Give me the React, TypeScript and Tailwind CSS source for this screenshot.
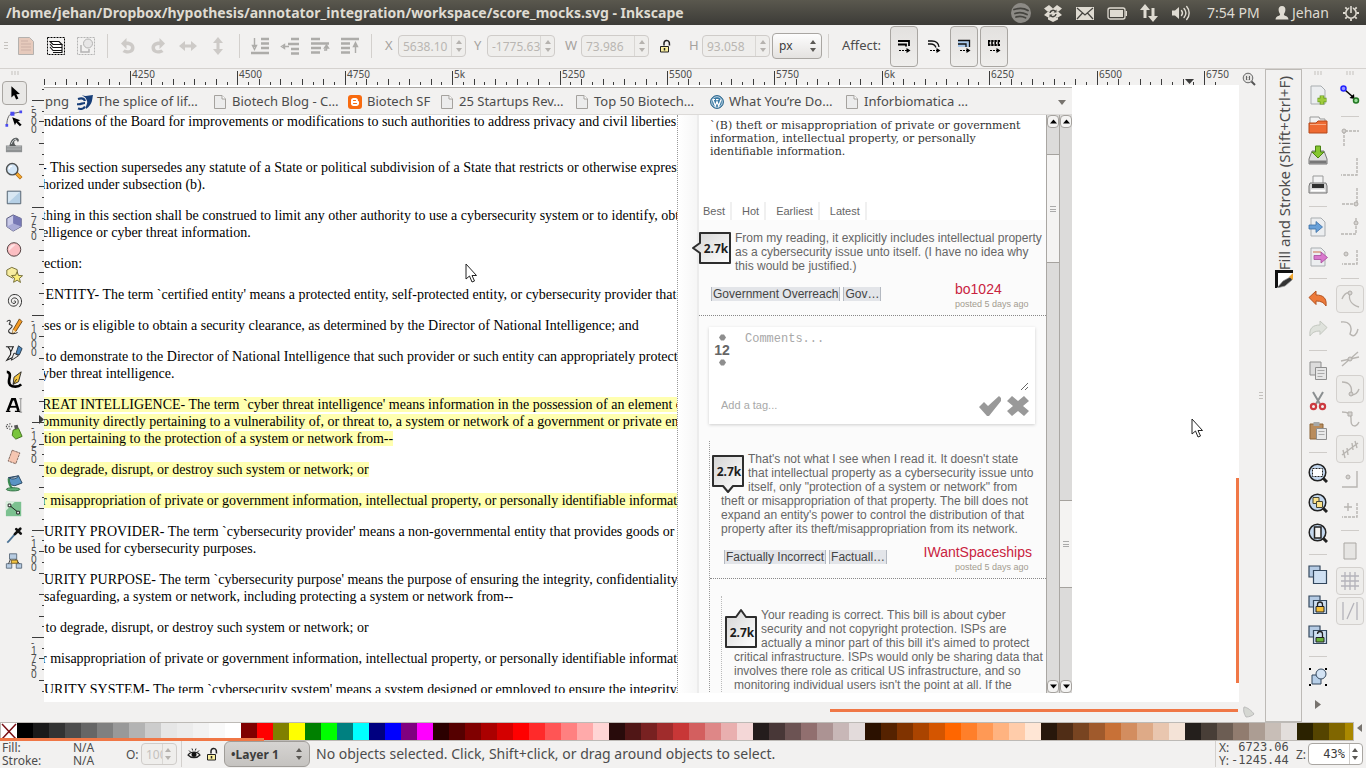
import React from "react";
import type { ReactNode } from "react";

/* ---------- shared helpers ---------- */

type IconProps = { children: ReactNode; size?: number; box?: number; faded?: boolean };

function Icon({ children, size = 20, box = 20, faded = false }: IconProps) {
  return (
    <svg
      aria-hidden="true"
      width={size}
      height={size}
      viewBox={`0 0 ${box} ${box}`}
      fill="none"
      className={faded ? "shrink-0 opacity-50" : "shrink-0"}
    >
      {children}
    </svg>
  );
}

function ToolButton({ label, children, pressed = false }: { label: string; children: ReactNode; pressed?: boolean }) {
  return (
    <button
      type="button"
      aria-label={label}
      className={
        pressed
          ? "flex h-7 w-7 items-center justify-center rounded border border-[#d3d0cd] bg-[#eeedeb]"
          : "flex h-7 w-7 items-center justify-center"
      }
    >
      {children}
    </button>
  );
}

function SpinArrows({ dim = true }: { dim?: boolean }) {
  return (
    <svg aria-hidden="true" width="10" height="16" viewBox="0 0 10 16" className="shrink-0">
      <path d="M2 6 5 2l3 4z" fill={dim ? "#b5b2ae" : "#5a5854"} />
      <path d="M2 10l3 4 3-4z" fill={dim ? "#b5b2ae" : "#5a5854"} />
    </svg>
  );
}

function Spin({ id, value }: { id: string; value: string }) {
  return (
    <div className="flex h-[22px] w-[68px] items-center rounded border border-[#cfccc9] bg-[#efeeec]">
      <input
        id={id}
        defaultValue={value}
        disabled
        className="h-full w-[53px] min-w-0 border-r border-[#d9d7d4] pl-1 text-[12px] text-[#b9b6b2]"
      />
      <span className="flex flex-1 justify-center">
        <SpinArrows />
      </span>
    </div>
  );
}

const VSep = () => <span className="flex w-3 justify-center"><span className="h-6 w-px bg-[#d3d0cd]" /></span>;
const HSep = () => <span className="flex h-3 items-center justify-center"><span className="h-px w-[18px] bg-[#cfccc9]" /></span>;

function GripH() {
  return (
    <Icon size={8} box={8}>
      <path d="M1 0v4M4 0v4M7 0v4" stroke="#c4c1bd" />
    </Icon>
  );
}

/* ---------- title bar ---------- */

function TitleBar() {
  return (
    <header className="flex h-[25px] shrink-0 items-center justify-between bg-linear-to-b from-[#5a584e] to-[#3c3b37] pl-1.5 pr-1.5 text-[#dfdbd2]">
      <h1 className="whitespace-nowrap text-[14px] font-bold leading-6">
        /home/jehan/Dropbox/hypothesis/annotator_integration/workspace/score_mocks.svg - Inkscape
      </h1>
      <div className="flex items-center text-[14px]">
        <span className="flex w-8 justify-center">
          <Icon>
            <circle cx="10" cy="10" r="10" fill="#8c8a85" />
            <path d="M3 6.500c4.500-1.500 10-1.500 14 1M4 10.500c4-1.300 8-1 12 1M5 14c3-1 6.500-.8 9.500.8" stroke="#45443f" strokeWidth="1.800" strokeLinecap="round" />
          </Icon>
        </span>
        <span className="flex w-8 justify-center">
          <Icon>
            <path d="M6 2 1 5.500 5 9 10 5.500zM14 2l5 3.500L15 9l-5-3.500zM1 12l4-3.500L10 12l-4 3zM19 12l-4-3.500L10 12l4 3zM5 15l5-2.500 5 2.500v1.500L10 19l-5-2.500z" fill="#dfdbd2" />
            <circle cx="10" cy="10.500" r="5" fill="#dfdbd2" />
            <path d="M7 10a3 3 0 0 1 5.500-1.300M13 11a3 3 0 0 1-5.500 1.300" stroke="#45443f" strokeWidth="1.500" />
            <path d="M13.500 6.500v3h-3zM6.500 14.500v-3h3z" fill="#45443f" />
          </Icon>
        </span>
        <span className="flex w-8 justify-center">
          <Icon>
            <path d="M1 4h18v13H1z" fill="#dfdbd2" />
            <path d="m2 5 8 7 8-7M2 16l5.500-6M18 16l-5.500-6" stroke="#45443f" strokeWidth="1.200" />
          </Icon>
        </span>
        <span className="flex w-8 justify-center">
          <Icon>
            <rect x="1" y="5" width="17" height="11" rx="2" stroke="#dfdbd2" strokeWidth="1.300" />
            <rect x="3" y="7" width="13" height="7" fill="#dfdbd2" />
            <path d="M19.300 8v5" stroke="#dfdbd2" strokeWidth="1.400" />
          </Icon>
        </span>
        <span className="flex w-8 justify-center">
          <Icon>
            <path d="M6 1 1 7h3.500v8h3V7H11zM14 19l-5-6h3.500V5h3v8H19z" fill="#dfdbd2" />
          </Icon>
        </span>
        <span className="flex w-8 justify-center">
          <Icon>
            <path d="M1 7.500h3L8 4v12l-4-3.500H1z" fill="#dfdbd2" />
            <path d="M10.500 7.500c1.200 1.500 1.200 3.500 0 5M13 5.500c2.300 2.700 2.300 6.300 0 9M15.700 3.500c3.300 3.800 3.300 9.200 0 13" stroke="#dfdbd2" strokeWidth="1.400" strokeLinecap="round" />
          </Icon>
        </span>
        <time className="ml-2.5 w-[67px] whitespace-nowrap">7:54 PM</time>
        <span className="flex w-4 justify-center">
          <Icon size={16} box={16}>
            <path d="M8 1c2.500 0 3.600 1.700 3.400 4-.2 2-1 3.400-1.500 4 0 1.200.5 1.500 2 2 1.500.6 2.400 1.400 2.600 3.500h-13c.2-2.100 1.100-2.900 2.600-3.500 1.500-.5 2-.8 2-2-.5-.6-1.300-2-1.500-4C4.400 2.700 5.500 1 8 1z" fill="#dfdbd2" />
          </Icon>
        </span>
        <span className="ml-0.5 w-[50px]">Jehan</span>
        <Icon size={18} box={18}>
          <circle cx="9" cy="9" r="5.200" stroke="#dfdbd2" strokeWidth="1.600" />
          <path d="M9 15v2M1 9h2M15 9h2M3.300 3.300l1.500 1.500M13.200 13.200l1.500 1.500M3.300 14.700l1.500-1.500M13.200 4.800l1.500-1.500" stroke="#dfdbd2" strokeWidth="1.800" />
          <path d="M7.300 2h3.400v7H7.300z" fill="#4a4943" />
          <path d="M9 2v7" stroke="#dfdbd2" strokeWidth="1.600" />
        </Icon>
      </div>
    </header>
  );
}

/* ---------- selector tool bar ---------- */

const rotateGlyph = "M3 7.500 8.500 2v3.500c5 0 8 2.500 8 6.300 0 3.700-3 5.700-6.500 5.700-2.500 0-4-.6-5.500-1.500l2-2.500c3 1.500 6.500 1 6.500-1.700 0-1.800-1.500-2.800-4.500-2.800V13z";

const stackArt = {
  bottom: { bars: "M11 3h8M11 7.500h8M11 12h8M1 17h18", arrow: "M4.500 2v9M2.500 9.500l2 4 2-4z" },
  down: { bars: "M11 3h8M8 8h11M11 13h8M11 17.500h8", arrow: "M3 10.500h6M4.500 8.500l-3 2 3 2z" },
  up: { bars: "M1 3h9M1 7.500h18M1 12h10M1 16.500h9", arrow: "M14 14h2.500v-3M14.500 12l2-3 2 3z" },
  top: { bars: "M1 3h18M1 7.500h9M1 12h9M1 16.500h9", arrow: "M15.500 17V8M13.500 10.500l2-4 2 4z" },
};

function Stack({ kind }: { kind: keyof typeof stackArt }) {
  return (
    <Icon faded>
      <path d={stackArt[kind].bars} stroke="#6b6965" strokeWidth="2.600" />
      <path d={stackArt[kind].arrow} stroke="#6b6965" strokeWidth="1.400" />
    </Icon>
  );
}

function AffectButton({ label, pressed, children }: { label: string; pressed: boolean; children: ReactNode }) {
  return (
    <button
      type="button"
      aria-label={label}
      aria-pressed={pressed}
      className={
        pressed
          ? "flex h-[41px] w-7 items-center justify-center rounded border border-[#a9a6a2] bg-linear-to-b from-[#e3e1df] to-[#efeeec]"
          : "flex h-[41px] w-7 items-center justify-center"
      }
    >
      {children}
    </button>
  );
}

function Padlock() {
  return (
    <Icon size={14} box={14}>
      <path d="M6 6.500V4a2.700 2.700 0 0 1 5.300-.5l.2 3" stroke="#222" strokeWidth="1.500" />
      <path d="M2.500 7.500h8v5.500h-8z" fill="#fbf0a0" stroke="#222" />
      <path d="M6.500 9v2.500" stroke="#222" strokeWidth="1.500" />
    </Icon>
  );
}

function SelectorBar() {
  const cell = "flex w-[30px] items-center justify-center";
  return (
    <div className="flex h-11 shrink-0 items-center border-b border-[#d5d2cf] pb-px text-[13px] text-[#4c4c4c]">
      <span className="flex w-[11px] justify-center">
        <Icon size={8} box={8}>
          <path d="M2 0.500h4M2 3.500h4M2 6.500h4" stroke="#c4c1bd" />
        </Icon>
      </span>
      <button type="button" aria-label="Select all" className={cell}>
        <Icon faded>
          <path d="M2.500 1.500h11l4 4v13h-15z" fill="#dba58a" stroke="#77736e" />
          <path d="M5 5h7M5 8h10M5 11h10M5 14h10" stroke="#a9705c" />
        </Icon>
      </button>
      <button type="button" aria-label="Select all in all layers" className={cell}>
        <Icon>
          <path d="M1.500 1.500h17v17h-17z" stroke="#000" strokeDasharray="2 1" />
          <path d="M4 5.500h9l3 3H7zM4 8l3 3.500h9v-3M4 11l3 3.500h9v-3M7 16.500h9v-2" fill="#fff" stroke="#111" strokeWidth="1.100" />
        </Icon>
      </button>
      <button type="button" aria-label="Deselect" className={cell}>
        <Icon faded>
          <path d="M1.500 1.500h17v17h-17z" stroke="#777" strokeDasharray="2 1" />
          <circle cx="12" cy="7.500" r="4.500" stroke="#777" fill="#ddd" />
          <path d="M5 9v7h8v-3" stroke="#777" strokeWidth="1.500" />
        </Icon>
      </button>
      <VSep />
      <button type="button" aria-label="Rotate counter-clockwise" className={cell}>
        <Icon faded><path d={rotateGlyph} fill="#a9a5a0" /></Icon>
      </button>
      <button type="button" aria-label="Rotate clockwise" className={cell}>
        <Icon faded><path d={rotateGlyph} fill="#a9a5a0" transform="translate(20 0) scale(-1 1)" /></Icon>
      </button>
      <button type="button" aria-label="Flip horizontally" className={cell}>
        <Icon faded><path d="M1 10l6-5v3.500h6V5l6 5-6 5v-3.500H7V15z" fill="#a9a5a0" /></Icon>
      </button>
      <button type="button" aria-label="Flip vertically" className={cell}>
        <Icon faded><path d="M10 1l5 6h-3.500v6H15l-5 6-5-6h3.500V7H5z" fill="#a9a5a0" /></Icon>
      </button>
      <VSep />
      <button type="button" aria-label="Lower to bottom" className={cell}><Stack kind="bottom" /></button>
      <button type="button" aria-label="Lower" className={cell}><Stack kind="down" /></button>
      <button type="button" aria-label="Raise" className={cell}><Stack kind="up" /></button>
      <button type="button" aria-label="Raise to top" className={cell}><Stack kind="top" /></button>
      <VSep />
      <label htmlFor="pos-x" className="w-[21px] pl-2 text-[#a5a29e]">X</label>
      <Spin id="pos-x" value="5638.10" />
      <label htmlFor="pos-y" className="w-[21px] pl-2 text-[#a5a29e]">Y</label>
      <Spin id="pos-y" value="-1775.63" />
      <label htmlFor="size-w" className="w-[26px] pl-2.5 text-[#a5a29e]">W</label>
      <Spin id="size-w" value="73.986" />
      <button type="button" aria-label="Lock width and height" className="flex w-8 justify-center"><Padlock /></button>
      <label htmlFor="size-h" className="w-[21px] pl-2 text-[#a5a29e]">H</label>
      <Spin id="size-h" value="93.058" />
      <div className="relative ml-0.5 flex items-center">
        <select aria-label="Unit" className="h-[26px] w-[50px] appearance-none rounded border border-[#a9a6a2] bg-linear-to-b from-[#fdfdfd] to-[#e4e2e0] pl-1.5 text-[12px] text-[#3c3c3c]">
          <option>px</option>
        </select>
        <span className="pointer-events-none absolute right-1"><SpinArrows dim={false} /></span>
      </div>
      <VSep />
      <span className="ml-2 w-12">Affect:</span>
      <div className="flex gap-0.5">
        <AffectButton label="Scale stroke width" pressed>
          <Icon size={14} box={14}>
            <path d="M1 2h11v5M1 5.500h8v2" stroke="#000" strokeWidth="1.800" />
            <path d="M2 11.500h8" stroke="#000" strokeDasharray="2 1" /><path d="M9.500 9v5l4-2.500z" fill="#000" />
          </Icon>
        </AffectButton>
        <AffectButton label="Scale rounded corners" pressed={false}>
          <Icon size={14} box={14}>
            <path d="M1 2h4c4 0 6.500 2.500 7 6M1 5h3c2.500 0 4 1 5 3.500" stroke="#111" strokeWidth="1.300" />
            <path d="M3 11.500h7" stroke="#000" strokeDasharray="2 1" /><path d="M9.500 9v5l4-2.500z" fill="#000" />
          </Icon>
        </AffectButton>
        <AffectButton label="Move gradients" pressed>
          <Icon size={14} box={14}>
            <path d="M1 2h11v6H1z" fill="#a9c8ea" />
            <path d="M1 1.500h11.500V8M1 5h8v3" stroke="#111" strokeWidth="1.300" />
            <path d="M3 11.500h7" stroke="#000" strokeDasharray="2 1" /><path d="M9.500 9v5l4-2.500z" fill="#000" />
          </Icon>
        </AffectButton>
        <AffectButton label="Move patterns" pressed>
          <Icon size={14} box={14}>
            <path d="M1 2h12M1 6h12" stroke="#000" strokeWidth="2" strokeDasharray="2.400 .8" /><path d="M1 4h12" stroke="#000" strokeDasharray="1.600 1.600" strokeWidth="2" />
            <path d="M3 11.500h7" stroke="#000" strokeDasharray="2 1" /><path d="M9.500 9v5l4-2.500z" fill="#000" />
          </Icon>
        </AffectButton>
      </div>
    </div>
  );
}

/* ---------- toolbox ---------- */

const tools: { label: string; art: ReactNode }[] = [
  { label: "Select", art: <path d="M6 2.500v12.500l3-2.700 2.300 5 2.500-1.200-2.300-4.800 4-.3z" fill="#000" /> },
  { label: "Edit nodes", art: <><path d="M2 17C2 9 5 4 8 4l10-2" stroke="#555" /><path d="M.500 15.500h3v3h-3zM6 2h4.500v4.500H6zM16 .5h3v3h-3z" fill="#4a4af0" /><path d="m8 8 3 9 1.500-3 4 4 2-1.500-4-4 2.500-1z" fill="#000" /></> },
  { label: "Tweak", art: <><path d="M1 10.500h18V18H1z" fill="#8e9192" /><path d="M2 12h16M2 14.500h16" stroke="#b9bcbc" /><path d="M5 11C6 4 10 1 13 2c3 1 3 4 1 5 0-2-1-2.500-2.500-2-2 .7-1.500 4 1 6z" fill="#565a5b" /><path d="M7 9c1-3 3-5.500 5.500-5.500" stroke="#dfe3e4" /></> },
  { label: "Zoom", art: <><path d="m12 12 6 6" stroke="#b06a10" strokeWidth="4" /><path d="m12.500 12.500 5 5" stroke="#f7ab30" strokeWidth="2.500" /><circle cx="8" cy="8" r="6.300" fill="#d3e6f7" stroke="#4f5253" strokeWidth="1.600" /><path d="M4.500 8a3.500 3.500 0 0 1 3.500-3.500" stroke="#fff" strokeWidth="1.500" /></> },
  { label: "Rectangle", art: <><path d="M2.500 3.500h15v14h-15z" fill="#b6d0e6" stroke="#4e5a66" /><path d="M3.500 16.500v-12h13z" fill="#d9e7f3" /></> },
  { label: "3D box", art: <><path d="m9 1 9 4v9l-9 5-7-5V5z" fill="#c9cae8" stroke="#4c4d75" /><path d="m9 10.500 9 3.500-9 5-7-5z" fill="#a9abd6" /><path d="M9 1v9.500l9 3.500V5z" fill="#7678b4" /></> },
  { label: "Ellipse", art: <><circle cx="10" cy="10.500" r="7.500" fill="#fbbec2" stroke="#433" /><path d="M4.500 12A6 6 0 0 1 12 5z" fill="#fde3e4" /></> },
  { label: "Star", art: <><path d="m7.500 1.500 6 2.500.5 6-5.500 3.500L2 10V4.500z" fill="#f7eda0" stroke="#6c6530" /><path d="m13.500 6.500 1.500 4 4.500.3-3.500 3 1.200 4.500-3.700-2.500-4 2.300 1.200-4.500-3.500-3 4.500-.3z" fill="#fbee7a" stroke="#6c6530" /></> },
  { label: "Spiral", art: <path d="M10.200 10.500c0-1.200 1.600-.8 1.600.6 0 2-3.200 2.400-4.300.3C6.200 8.700 8.300 6.300 11 6.600c3.700.5 4.700 4.700 2.600 7.300-2.600 3-7.600 2.200-9.200-1.300C2.400 8 5.300 3.200 10 2.800c5.500-.4 9 4 8.300 9-.3 2-1.100 3.700-2.400 5" stroke="#333" strokeWidth="1.100" /> },
  { label: "Pencil", art: <><path d="M2 4c3-3 5-1 3 2-1.500 2 3 1 3 3 0 3-5 3-4 6s7 3 10 1" stroke="#333" strokeWidth="1.200" /><path d="m16 1 3 3-7 11-3.500 2 .5-4z" fill="#f59a23" stroke="#6c4410" /><path d="m9 13 3 2-3.500 2z" fill="#f6e4b8" /></> },
  { label: "Bezier", art: <><path d="M1 3h9M9 3 7 8M3 3c3 3 4 6 3 9l-4 6 9-4" stroke="#222" strokeWidth="1.200" /><path d="m15 2 4 3-3 7-4-1z" fill="#4d88bd" stroke="#234" /><path d="m10 10 5 3-6 4-2 1z" fill="#ececec" stroke="#222" /></> },
  { label: "Calligraphy", art: <><path d="M2 2c3 0 4 3 3 7s-1 8 3 9 8 0 10-2" stroke="#000" strokeWidth="3" /><path d="m18 2-8 6-1 8 6-3z" fill="#f5c640" stroke="#222" /><path d="m9 16 4-6" stroke="#222" /></> },
  { label: "Text", art: <><path d="m3 16.500 5-13h3l4 13" stroke="#000" strokeWidth="2.800" /><path d="M5 12h8" stroke="#000" strokeWidth="2" /><path d="M1 17h5M11 17h6" stroke="#000" strokeWidth="1.500" /><path d="M17.500 3v15M16 3h3M16 18h3" stroke="#888" /></> },
  { label: "Spray", art: <><path d="m9 9 6-2 4 9-7 3-4-4z" fill="#79c53c" stroke="#3c6c18" /><path d="m10 4 4-1 1 4-4 1z" fill="#555" /><path d="M2 3h1M5 2h1M4 5h1M7 5h1M2 7h1M5 8h1M1 5h1" stroke="#222" strokeWidth="1.400" /></> },
  { label: "Eraser", art: <path d="m8 2.500 8.500 3L12 17.500l-8.500-3z" fill="#f6c6b1" stroke="#7c6258" strokeDasharray="3 .7" /> },
  { label: "Paint bucket", art: <><path d="m4 4 11-2 4 8-8 3-5-1z" fill="#5a94c4" stroke="#24415c" /><path d="M4 4c5 0 8-1 11-2-1 3-7 5-11 2z" fill="#cfdde8" stroke="#24415c" /><path d="M4 5c0 5 1 8 4 11" stroke="#3a8a50" strokeWidth="2.200" /><ellipse cx="9" cy="17" rx="7.500" ry="1.800" fill="#62b377" stroke="#2c6b3d" /></> },
  { label: "Gradient", art: <><path d="M1 2h17v16H1z" fill="#7cc190" /><path d="M1 2h10L1 12z" fill="#d8efdd" /><path d="m5 6 10 8" stroke="#111" /><path d="M3.500 4.500h3v3h-3zM13 12.500h3v3h-3z" fill="#fff" stroke="#111" /></> },
  { label: "Dropper", art: <><path d="m12 8-7 8-2.500 2.500" stroke="#4c7396" strokeWidth="2" /><path d="m12.500 3.500 5 5M11 9l6-6" stroke="#111" strokeWidth="3" strokeLinecap="round" /></> },
  { label: "Connector", art: <><path d="M5 2h8v6H5zM1.500 13h6v5h-6zM12.500 13h6v5h-6z" fill="#b7cce2" stroke="#5b6b7c" /><path d="M6 8 4 13M12 8l4 5" stroke="#333" /><path d="M7 9h7v3.500H7z" fill="#f5c640" stroke="#6c5520" /></> },
];

function Toolbox() {
  return (
    <nav aria-label="Tools" className="flex w-[27px] shrink-0 flex-col items-end">
      <span className="flex h-[11px] w-6 items-center justify-center"><GripH /></span>
      {tools.map((t, i) => (
        <button
          key={t.label}
          type="button"
          aria-label={t.label}
          className={
            i === 0
              ? "my-px flex h-6 w-[25px] items-center justify-center rounded border border-[#a9a6a2] bg-[#e9e8e6]"
              : "flex h-[26px] w-[25px] items-center justify-center pr-0.5"
          }
        >
          <Icon size={18}>{t.art}</Icon>
        </button>
      ))}
    </nav>
  );
}

/* ---------- rulers ---------- */

const STEP = 107.4;
const hLabels = ["4250", "4500", "4750", "5k", "5250", "5500", "5750", "6k", "6250", "6500", "6750"];
const vLabels = ["-500", "-750", "-1000", "-1250", "-1500", "-1750"];

function HRuler() {
  const ticks = Array.from({ length: 112 }, (_, i) => ({ x: Math.round(86 - STEP + (i * STEP) / 10), k: i % 10 }));
  return (
    <svg aria-hidden="true" width="100%" height="20" className="-mt-1 block shrink-0 overflow-hidden">
      {ticks.map((t, i) => (
        <path key={i} d={`M${t.x + 0.5} ${t.k === 0 ? 6 : t.k % 2 ? 17 : 14}V20`} stroke="#3c3c3c" />
      ))}
      {hLabels.map((l, i) => (
        <text key={l} x={Math.round(88 + i * STEP)} y="13" fontSize="10" fill="#4c4c4c">{l}</text>
      ))}
      <path d="M1141 14h9l-4.500 5z" fill="#3c3c3c" />
    </svg>
  );
}

function VRuler() {
  const ticks = Array.from({ length: 66 }, (_, i) => ({ y: Math.round(15 - STEP + (i * STEP) / 10), k: i % 10 }));
  return (
    <div className="flex w-[17px] shrink-0 pt-4">
      <svg aria-hidden="true" width="17" height="100%" className="block shrink-0 overflow-hidden">
        {ticks.map((t, i) => (
          <path key={i} d={`M${t.k === 0 ? 5 : t.k % 2 ? 15 : 12} ${t.y + 0.5}H17`} stroke="#3c3c3c" />
        ))}
        {vLabels.map((l, i) => (
          <text key={l} y={Math.round(15 + i * STEP) + 1} fontSize="10" fill="#4c4c4c">
            {l.split("").map((c, j) => (
              <tspan key={j} x="4" dy="8">{c}</tspan>
            ))}
          </text>
        ))}
        <path d="M12 330v9l5-4.500z" fill="#3c3c3c" />
      </svg>
    </div>
  );
}

/* ---------- browser page on the canvas ---------- */

function PageGlyph() {
  return (
    <Icon size={14} box={14}>
      <path d="M1.500.5h7.500l3.500 3.500v9.500h-11z" fill="#ececec" stroke="#a5a29e" />
      <path d="M9 .5V4h3.500" fill="#fff" stroke="#a5a29e" />
    </Icon>
  );
}

const bookmarks: { title: string; art: ReactNode }[] = [
  {
    title: "The splice of lif…",
    art: (
      <Icon size={16} box={16}>
        <path d="M5 1c4 2 7 0 11 0-1 4 0 9-7 14-1-3 2-5 1-8C9 3 7 3 5 1z" fill="#173e78" />
        <path d="M1 5c3-1 6-1 7 2M0 10c3 1 5-1 8-1M1 14.500c3 1 6 0 7-2" stroke="#173e78" strokeWidth="2.200" />
      </Icon>
    ),
  },
  { title: "Biotech Blog - C…", art: <PageGlyph /> },
  {
    title: "Biotech SF",
    art: (
      <Icon size={14} box={14}>
        <rect width="14" height="14" rx="3" fill="#f86b10" />
        <path d="M5.500 3h2.200c1.300 0 2.200 1 2.200 2.200 0 .8.300 1 1.100 1.200v2.100c0 1.500-1.100 2.500-2.500 2.500h-3C4 11 3 10 3 8.500v-3C3 4 4 3 5.500 3z" fill="#fff" />
        <path d="M5.500 5.500h2M5.500 8.500h3" stroke="#f86b10" strokeWidth="1.200" strokeLinecap="round" />
      </Icon>
    ),
  },
  { title: "25 Startups Rev…", art: <PageGlyph /> },
  { title: "Top 50 Biotech…", art: <PageGlyph /> },
  {
    title: "What You’re Do…",
    art: (
      <Icon size={14} box={14}>
        <circle cx="7" cy="7" r="6.400" fill="#3c7ba5" stroke="#2b658b" />
        <circle cx="7" cy="7" r="5.300" stroke="#dce9f1" strokeWidth=".8" />
        <path d="M3 4.500 5.300 11 7 6.500 8.700 11 11 4.500M2.500 4.500h2.500M6 4.500h2.500" stroke="#fff" strokeWidth="1.200" />
      </Icon>
    ),
  },
  { title: "Inforbiomatica …", art: <PageGlyph /> },
];

function BookmarkBar() {
  return (
    <div className="flex h-7 items-center border-y border-t-[#a9a6a2] border-b-[#dcdad8] bg-[#f2f1f0] pt-0.5 text-[13px] text-[#4c4c4c]">
      <a href="#png" className="w-[33px] pl-px">png</a>
      {bookmarks.map((b) => (
        <a
          key={b.title}
          href="#bookmark"
          className={b.title === "Biotech SF" ? "flex w-[92px] items-center gap-1 whitespace-nowrap" : "flex w-[135px] items-center gap-1 whitespace-nowrap"}
        >
          <span className="flex w-4 justify-center">{b.art}</span>
          {b.title}
        </a>
      ))}
      <span className="ml-auto mr-1.5">
        <Icon size={8} box={8}><path d="M0 2h8L4 7z" fill="#77736e" /></Icon>
      </span>
    </div>
  );
}

type Line = { text: string; cut?: boolean };
type Para = { mark?: boolean; lines: Line[] };

const bill: Para[] = [
  { lines: [{ text: "- This section supersedes any statute of a State or political subdivision of a State that restricts or otherwise expressly", cut: true }, { text: "horized under subsection (b).", cut: true }] },
  { lines: [{ text: "thing in this section shall be construed to limit any other authority to use a cybersecurity system or to identify, obtain", cut: true }, { text: "elligence or cyber threat information.", cut: true }] },
  { lines: [{ text: "ection:" }] },
  { lines: [{ text: " ENTITY- The term `certified entity' means a protected entity, self-protected entity, or cybersecurity provider that--", cut: true }] },
  { lines: [{ text: "ses or is eligible to obtain a security clearance, as determined by the Director of National Intelligence; and" }] },
  { lines: [{ text: " to demonstrate to the Director of National Intelligence that such provider or such entity can appropriately protect", cut: true }, { text: "yber threat intelligence.", cut: true }] },
  { mark: true, lines: [{ text: "REAT INTELLIGENCE- The term `cyber threat intelligence' means information in the possession of an element of", cut: true }, { text: "ommunity directly pertaining to a vulnerability of, or threat to, a system or network of a government or private entity", cut: true }, { text: "tion pertaining to the protection of a system or network from--" }] },
  { mark: true, lines: [{ text: " to degrade, disrupt, or destroy such system or network; or", cut: true }] },
  { mark: true, lines: [{ text: "r misappropriation of private or government information, intellectual property, or personally identifiable information", cut: true }] },
  { lines: [{ text: "URITY PROVIDER- The term `cybersecurity provider' means a non-governmental entity that provides goods or" }, { text: "to be used for cybersecurity purposes." }] },
  { lines: [{ text: "URITY PURPOSE- The term `cybersecurity purpose' means the purpose of ensuring the integrity, confidentiality," }, { text: "safeguarding, a system or network, including protecting a system or network from--" }] },
  { lines: [{ text: " to degrade, disrupt, or destroy such system or network; or", cut: true }] },
  { lines: [{ text: "r misappropriation of private or government information, intellectual property, or personally identifiable information", cut: true }] },
  { lines: [{ text: "URITY SYSTEM- The term `cybersecurity system' means a system designed or employed to ensure the integrity," }] },
];

function BillText() {
  return (
    <article className="w-[634px] shrink-0 overflow-hidden border-r border-dotted border-[#999] bg-white font-['Liberation_Serif',serif] text-[14px] leading-[17px] text-black">
      <p className="mb-[29px] -mt-0.5 whitespace-pre">ndations of the Board for improvements or modifications to such authorities to address privacy and civil liberties</p>
      {bill.map((p, i) => (
        <p key={i} className="mb-3.5 whitespace-pre">
          {p.lines.map((l) => (
            <span key={l.text} className={l.cut ? "-ml-0.5 block" : "block"}>
              {p.mark ? <mark className="bg-[#ffffb0] text-black">{l.text}</mark> : l.text}
            </span>
          ))}
        </p>
      ))}
    </article>
  );
}

const badgeShapes = {
  left: "M8 2h30v30H8V22l-7-5 7-5z",
  down: "M2 2h30v30H22l-5 6-5-6H2z",
  up: "M2 9h10l5-7 5 7h10v30H2z",
};

function Badge({ tail }: { tail: "left" | "down" | "up" }) {
  const left = tail === "left";
  return (
    <svg role="img" aria-label="Score 2.7k" width={left ? 40 : 34} height={left ? 34 : 41} className="shrink-0">
      <defs>
        <linearGradient id={`g-${tail}`} x1="0" y1="0" x2="1" y2="1">
          <stop offset="0" stopColor="#d4d4d4" />
          <stop offset="1" stopColor="#fff" />
        </linearGradient>
      </defs>
      <path d={badgeShapes[tail]} fill={`url(#g-${tail})`} stroke="#2e2e2e" strokeWidth="2" strokeLinejoin="round" />
      <text x={left ? 24 : 18} y={tail === "up" ? 29 : 22} fontSize="12" fontWeight="700" textAnchor="middle" fill="#1c1c1c" className="font-['Noto_Sans',sans-serif]">2.7k</text>
    </svg>
  );
}

function Meta({ tags, user, indent }: { tags: string[]; user: string; indent: string }) {
  return (
    <div className={`flex items-start justify-between pr-3.5 pt-2 ${indent}`}>
      <ul className="flex gap-[3px] pt-1.5">
        {tags.map((t) => (
          <li key={t}>
            <a href="#tag" className="block border-x border-[#b4b9c1] bg-[#e3e5e9] px-px text-[12px] leading-[14px] text-[#444]">{t}</a>
          </li>
        ))}
      </ul>
      <div>
        <a href="#user" className="block text-[14px] leading-4 text-[#c9233f]">{user}</a>
        <span className="ml-auto block w-[77px] whitespace-nowrap text-[9px] leading-[15px] text-[#a39b90]">posted 5 days ago</span>
      </div>
    </div>
  );
}

function Scroller({ thumb }: { thumb: string }) {
  const cap = "flex h-[13px] w-full items-center justify-center rounded-sm border border-[#a5a29e] bg-[#f4f3f2]";
  return (
    <div className="flex w-[13px] shrink-0 flex-col border-l border-[#aaa7a3] bg-[#dcdbda]">
      <button type="button" aria-label="Scroll up" className={cap}>
        <Icon size={7} box={7}><path d="M0 5.500h7L3.500 1.500z" fill="#000" /></Icon>
      </button>
      <div className="relative flex-1">
        <div className={`absolute inset-x-0 flex items-center justify-center border-y border-[#a5a29e] bg-[#f4f3f2] ${thumb}`}>
          <Icon size={6} box={6}><path d="M0 .5h6M0 3.500h6M0 5.500h6" stroke="#aaa" /></Icon>
        </div>
      </div>
      <button type="button" aria-label="Scroll down" className={cap}>
        <Icon size={7} box={7}><path d="M0 1.500h7L3.500 5.500z" fill="#000" /></Icon>
      </button>
    </div>
  );
}

function VoteDot() {
  return <Icon size={7} box={7}><path d="M2 .5h3l2 3-2 3H2l-2-3z" fill="#8e8e8e" /></Icon>;
}

function CommentForm() {
  return (
    <form className="ml-2.5 mr-[11px] mt-[11px] bg-white pb-1.5 pr-1.5 pt-1 shadow-[0_1px_3px_rgba(0,0,0,0.18)]">
      <div className="flex">
        <div className="flex w-[26px] flex-col items-center pt-[3px] text-[14px] font-bold leading-[18px] text-[#666]">
          <VoteDot />
          12
          <VoteDot />
        </div>
        <textarea
          aria-label="Comment"
          placeholder="Comments..."
          className="ml-1.5 h-[60px] flex-1 bg-transparent px-1 font-['Liberation_Mono',monospace] text-[12px] leading-4 placeholder:text-[#a8a8a8]"
        />
      </div>
      <div className="flex h-[27px] items-center pl-3">
        <input aria-label="Add a tag" placeholder="Add a tag..." className="min-w-0 flex-1 bg-transparent text-[11px] placeholder:text-[#a8a8a8]" />
        <button type="button" aria-label="Save" className="mr-1.5">
          <Icon size={22} box={22}><path d="m0 13 5-5 4 4L20 2l2 2v3L10 22H8z" fill="#999" /></Icon>
        </button>
        <button type="button" aria-label="Cancel">
          <Icon size={22} box={22}><path d="M5 2 11 7l6-5 5 5-6 5 6 5-5 5-6-5-6 5-5-5 6-5-6-5z" fill="#999" /></Icon>
        </button>
      </div>
    </form>
  );
}

function Discussion() {
  const tab = "h-[18px] border-r-2 border-[#f0f0f0] px-[5px]";
  return (
    <aside className="w-[349px] shrink-0 border-l-2 border-[#ececec] bg-[#fbfbfb] font-['Liberation_Sans',sans-serif] text-[12px] leading-[14px] text-[#666]">
      <div className="bg-white">
        <blockquote className="h-[87px] whitespace-nowrap pl-[11px] pt-1 font-['DejaVu_Serif',serif] text-[11px] leading-[13px] text-[#333]">
          `(B) theft or misappropriation of private or government
          <br />
          information, intellectual property, or personally
          <br />
          identifiable information.
        </blockquote>
        <div className="-ml-px flex gap-[5px] text-[11px] leading-[18px]">
          <button type="button" className={tab}>Best</button>
          <button type="button" className={tab}>Hot</button>
          <button type="button" className={tab}>Earliest</button>
          <button type="button" className={tab}>Latest</button>
        </div>
      </div>

      <section className="border-b border-dotted border-[#888] pb-[3px] pt-[11px]">
        <div className="-ml-[7px] flex gap-[3px] whitespace-nowrap">
          <Badge tail="left" />
          <p>
            From my reading, it explicitly includes intellectual property
            <br />
            as a cybersecurity issue unto itself. (I have no idea why
            <br />
            this would be justified.)
          </p>
        </div>
        <Meta tags={["Government Overreach", "Gov…"]} user="bo1024" indent="pl-3" />
      </section>

      <CommentForm />

      <div className="ml-[10px] mt-[17px] border-l border-dotted border-[#999]">
        <section className="border-b border-dotted border-[#888] pb-[3px] pt-[11px]">
          <div className="whitespace-nowrap pl-[11px]">
            <div className="float-left -ml-2.5 mr-[3px] h-[42px] w-[34px] pt-0.5"><Badge tail="down" /></div>
            <p>
              That's not what I see when I read it. It doesn't state
              <br />
              that intellectual property as a cybersecurity issue unto
              <br />
              itself, only "protection of a system or network" from
              <br />
              theft or misappropriation of that property. The bill does not
              <br />
              expand an entity's power to control the distribution of that
              <br />
              property after its theft/misappropriation from its network.
            </p>
          </div>
          <Meta tags={["Factually Incorrect", "Factuall…"]} user="IWantSpaceships" indent="pl-3.5" />
        </section>

        <section className="ml-[11px] mt-[17px] border-l border-dotted border-[#bbb] pt-3">
          <div className="whitespace-nowrap pl-3">
            <div className="float-left -ml-2.5 mr-[3px] h-[42px] w-[34px]"><Badge tail="up" /></div>
            <p>
              Your reading is correct. This bill is about cyber
              <br />
              security and not copyright protection. ISPs are
              <br />
              actually a minor part of this bill it's aimed to protect
              <br />
              critical infrastructure. ISPs would only be sharing data that
              <br />
              involves there role as critical US infrastructure, and so
              <br />
              monitoring individual users isn't the point at all. If the
            </p>
          </div>
        </section>
      </div>
    </aside>
  );
}

function Pointer() {
  return (
    <svg aria-hidden="true" width="12" height="20" viewBox="0 0 12 20">
      <path d="M1 1v15l3.500-3 2.500 6 2.500-1L7 12.500h4.500z" fill="#fff" stroke="#222" />
    </svg>
  );
}

function Canvas() {
  return (
    <div className="relative min-w-0 flex-1 overflow-hidden bg-white">
      <div className="flex h-[608px] w-[1028px] flex-col overflow-hidden pt-[2px]">
        <BookmarkBar />
        <div className="flex min-h-0 flex-1">
          <BillText />
          <div className="w-[19px] shrink-0 bg-linear-to-r from-white to-[#f6f6f6]" />
          <Discussion />
          <Scroller thumb="top-[26px] h-[109px]" />
          <Scroller thumb="top-[372px] h-[88px]" />
        </div>
      </div>
      <span className="absolute left-[421px] top-[178px]"><Pointer /></span>
      <span className="absolute left-[1147px] top-[333px]"><Pointer /></span>
      <span className="absolute right-0 top-[393px] h-[205px] w-[3px] bg-[#f07746]" />
    </div>
  );
}

/* ---------- right-hand docks ---------- */

const magnifier = (inner: ReactNode) => (
  <>
    <path d="m14 14 5 5" stroke="#222" strokeWidth="3" />
    <circle cx="9.500" cy="9.500" r="8.300" fill="#c3d7ee" stroke="#222" strokeWidth="1.500" />
    {inner}
  </>
);
const squares = (inner: ReactNode) => (
  <>
    <path d="M1 1h11v11H1z" fill="#b5cbe4" stroke="#33475c" strokeWidth="1.200" />
    <path d="M5.500 5.500h13v13h-13z" fill="#cfe0f2" stroke="#33475c" strokeWidth="1.200" />
    {inner}
  </>
);
const leaf = <path d="M3 1h10l4 4v14H3z" fill="#eceef0" stroke="#a9adb0" />;

const commands: ({ label: string; art: ReactNode } | null)[] = [
  { label: "New", art: <>{leaf}<path d="M14 10.500v9M9.500 15h9" stroke="#5f9619" strokeWidth="4.600" /><path d="M14 11v8M10 15h8" stroke="#9fcb3c" strokeWidth="3" /></> },
  { label: "Open", art: <><path d="M2 2h9l1 2h5v8H2z" fill="#f2f2f2" stroke="#999" /><path d="M1 8h7l2-2h9v12H1z" fill="#ee6a32" stroke="#b4481b" /><path d="M2 9.500h16" stroke="#f8a982" /></> },
  { label: "Save", art: <><path d="m4 6-3 8v5h18v-5l-3-8z" fill="#dcdcdc" stroke="#777" /><path d="M1.500 15.500h17v3h-17z" fill="#777" /><path d="M7.500 1h5v6H16l-6 6-6-6h3.500z" fill="#86c72f" stroke="#4b8212" /></> },
  { label: "Print", art: <><path d="M5 1h10v8H5z" fill="#f3f3f3" stroke="#999" /><path d="M2 8h16l1 3v7H1v-7z" fill="#d5d5d5" stroke="#777" /><path d="M4 9h12v4H4z" fill="#2f2f2f" /><path d="M3 15.500h14" stroke="#fff" strokeWidth="2" /></> },
  null,
  { label: "Import", art: <>{leaf}<path d="M1 8h7V4.500L14.500 10 8 15.500V12H1z" fill="#68a0d8" stroke="#3b6ea5" strokeWidth=".8" /></> },
  { label: "Export", art: <>{leaf}<path d="M5 5h8" stroke="#d79a82" strokeWidth="1.500" /><path d="M6 8.500h7V5l6.500 5.500L13 16v-3.500H6z" fill="#d978cd" stroke="#a64b9a" strokeWidth=".8" /></> },
  null,
  { label: "Undo", art: <path d="M1 8.500 8 2v4c7 0 11 3 10 11-2-3.500-5-5-10-5v3.500z" fill="#ed7a3a" stroke="#b4521f" /> },
  { label: "Redo", art: <path d="M19 8.500 12 2v4C5 6 1 9 2 17c2-3.500 5-5 10-5v3.500z" fill="#dfe2dc" stroke="#c3c7bf" /> },
  null,
  { label: "Copy", art: <><path d="M2 1h11v13H2z" fill="#dcdcdc" stroke="#8e8e8e" /><path d="M7.500 6.500h11v12h-11z" fill="#e6e6e6" stroke="#8e8e8e" /><path d="M9.500 9.500h7M9.500 12.500h7M9.500 15.500h5" stroke="#aaa" /></> },
  { label: "Cut", art: <><path d="M5 1 12 13M15 1 8 13" stroke="#8b8f90" strokeWidth="2" /><circle cx="5.500" cy="15.500" r="2.600" stroke="#cc3a40" strokeWidth="2.200" /><circle cx="14.500" cy="15.500" r="2.600" stroke="#cc3a40" strokeWidth="2.200" /></> },
  { label: "Paste", art: <><path d="M2 3h13v15H2z" fill="#b98c5c" stroke="#8b6438" /><path d="M5.500 1h6v4h-6z" fill="#a6a8a8" /><path d="M8.500 7.500h10v11h-10z" fill="#e9e9e9" stroke="#8e8e8e" /><path d="M10.500 10.500h6M10.500 13.500h6" stroke="#aaa" /></> },
  null,
  { label: "Zoom selection", art: magnifier(<path d="M4.500 5.500h10v8h-10z" fill="#fff" stroke="#222" strokeDasharray="2 1" />) },
  { label: "Zoom drawing", art: magnifier(<><path d="M5 4.500h6v6H5z" fill="#fbe28a" stroke="#443" /><path d="M8.500 8.500h6v6h-6z" fill="#fbe28a" stroke="#443" /></>) },
  { label: "Zoom page", art: magnifier(<path d="M6.500 4h6.500v11H6.500z" fill="#f4f4f4" stroke="#222" strokeWidth="1.500" />) },
  null,
  { label: "Duplicate", art: squares(null) },
  { label: "Clone", art: squares(<><path d="M8 11.500h8V17H8z" fill="#f7c23c" stroke="#222" /><path d="M9.500 11V9.500a2.500 2.500 0 0 1 5 0V11" stroke="#222" strokeWidth="1.300" /></>) },
  { label: "Unlink clone", art: squares(<><path d="M8 12.500h8V17H8z" fill="#6bb33a" stroke="#222" /><path d="M9.500 9a2.500 2.500 0 0 1 5 0v3.500" stroke="#222" strokeWidth="1.300" /></>) },
  null,
  { label: "Group", art: <><path d="M4 8h9v9H4z" fill="#b7cfe8" stroke="#33475c" /><circle cx="13" cy="7" r="5" fill="#d3e3f4" stroke="#33475c" /><path d="M1 1h2v2H1zM17 1h2v2h-2zM1 17h2v2H1zM17 17h2v2h-2z" fill="#000" /></> },
];

const dash = { stroke: "#b8b5b1", strokeDasharray: "3 1", strokeWidth: 1.4 };
const dot = (x: number, y: number) => <circle cx={x} cy={y} r="2" fill="#d4d2cf" stroke="#b0ada9" />;
const line = { stroke: "#b8b5b1", strokeWidth: 1.4 };

const snaps: ({ label: string; art: ReactNode; on?: boolean } | null)[] = [
  { label: "Enable snapping", art: <><path d="m5 5 8 7" stroke="#000" strokeWidth="1.500" /><path d="m14 9 .5 5-5-1z" fill="#000" /><circle cx="3.500" cy="3.500" r="2.500" fill="#99f" stroke="#22f" strokeWidth="1.500" /><circle cx="16" cy="15.500" r="2.500" fill="#9d9" stroke="#272" strokeWidth="1.500" /></> },
  null,
  { label: "Snap bounding box", art: <><path d="M4 19V4h15" {...dash} />{dot(4, 4)}</> },
  { label: "Snap to edges", art: <path d="M17 1v17H1" {...dash} /> },
  { label: "Snap to corners", art: <><path d="M17 1v16H1" {...dash} />{dot(16, 17)}</> },
  { label: "Snap to edge midpoints", art: <><path d="M16 1v16H1" {...dash} />{dot(16, 6)}</> },
  { label: "Snap to centers", art: <><path d="M17 3v14H2" {...dash} />{dot(6, 7)}</> },
  null,
  { label: "Snap nodes", on: true, art: <><path d="M2 10C4 5 7 3 10 4c-2 7 2 12 9 14" {...line} />{dot(10, 4)}</> },
  { label: "Snap to paths", art: <path d="M1 3c8-1 12 4 9 12 4 4 7 0 8-5" {...line} /> },
  { label: "Snap to intersections", art: <><path d="M2 17 18 3M1 12l18-4" {...line} />{dot(10, 10)}</> },
  { label: "Snap to cusp nodes", on: true, art: <><path d="M2 3c7 0 11 4 9 13 4 0 7-3 8-6" {...line} />{dot(11, 15)}</> },
  { label: "Snap to smooth nodes", art: <><path d="M2 3c6 0 9 2 9 6 0 5 0 8 4 8 2 0 3-2 4-4" {...line} /><path d="M8 3h4v4H8z" fill="#d4d2cf" stroke="#b0ada9" /></> },
  { label: "Snap midpoints", on: true, art: <path d="M2 16 18 4M3 11l2 8M7 9l1 7M12 4l1 7M15 2l2 7" {...line} /> },
  { label: "Snap object centers", art: <><path d="M17 2v16H2" {...line} />{dot(8, 8)}</> },
  { label: "Snap rotation center", art: <><path d="M17 4v14H2" {...dash} /><path d="M8 4v8M4 8h8" {...line} /></> },
  null,
  { label: "Snap to page", art: <path d="M4 2h12v16H4z" fill="#e6e5e3" stroke="#aaa7a3" /> },
  { label: "Snap to grids", on: true, art: <path d="M5 1v18M10 1v18M15 1v18M1 5h18M1 10h18M1 15h18" stroke="#b4b3ba" strokeWidth="1.300" /> },
  { label: "Snap to guides", on: true, art: <path d="M3 1v18M17 1v18M14 2 7 18" stroke="#b4b3ba" strokeWidth="1.300" /> },
];

function IconColumn({ label, items }: { label: string; items: ({ label: string; art: ReactNode; on?: boolean } | null)[] }) {
  return (
    <nav aria-label={label} className="flex w-8 shrink-0 flex-col items-center">
      <span className="flex h-[11px] items-center"><GripH /></span>
      {items.map((it, i) =>
        it ? (
          <span key={it.label} className="py-px">
            <ToolButton label={it.label} pressed={it.on}><Icon>{it.art}</Icon></ToolButton>
          </span>
        ) : (
          <HSep key={i} />
        ),
      )}
      {label === "Commands" && (
        <span className="pt-2"><Icon size={10} box={10}><path d="M2 0v9l6-4.500z" fill="#77736e" /></Icon></span>
      )}
    </nav>
  );
}

function Workspace() {
  return (
    <main className="flex min-h-0 flex-1">
      <Toolbox />
      <VRuler />
      <div className="flex min-w-0 flex-1 flex-col">
        <HRuler />
        <Canvas />
        <div className="flex h-5 shrink-0 justify-end pr-px pt-[7px]">
          <span className="h-[3px] w-[408px] bg-[#f07746]" />
        </div>
      </div>
      <div className="flex w-[26px] shrink-0 flex-col items-center justify-between pt-[3px]">
        <span className="mr-1.5">
          <Icon size={14} box={14}>
            <path d="m9 9 4 4" stroke="#555" strokeWidth="2" /><circle cx="6" cy="6" r="4.800" stroke="#666" fill="#e4e3e1" /><path d="M4.500 4v4M7.500 4v4M6 5v.5M6 7v.5" stroke="#666" />
          </Icon>
        </span>
        <span className="flex w-full justify-end">
          <Icon size={8} box={8}><path d="M2 .5h4M2 3.500h4M2 6.500h4" stroke="#c4c1bd" /></Icon>
        </span>
        <span className="mb-1 mr-3 pl-1.5">
          <Icon size={12} box={12}><path d="M1 1c3 0 8 4 10 7-2 2-5 3-8 3C1 8 0 4 1 1z" fill="#d5d7d2" stroke="#bbb" /></Icon>
        </span>
      </div>
      <button type="button" className="flex w-[37px] shrink-0 flex-col items-center border border-[#bdbab6] pt-1.5 text-[15px] text-[#4c4c4c]">
        <span className="rotate-180 whitespace-nowrap leading-5 [writing-mode:vertical-rl]">Fill and Stroke (Shift+Ctrl+F)</span>
        <Icon size={18} box={18}>
          <path d="M0 0h18v3L2 18H0z" fill="#111" /><path d="M3 3h15v3L4 16H3z" fill="#fff" />
          <path d="m17 6-9 5-6 7 8-2 7-6z" fill="#333" stroke="#999" strokeWidth=".7" /><path d="m18 3-4 4 4 3z" fill="#f0a52a" />
        </Icon>
      </button>
      <IconColumn label="Commands" items={commands} />
      <IconColumn label="Snapping" items={snaps} />
    </main>
  );
}

/* ---------- palette and status bar ---------- */

const palette =
  "000000 1a1a1a 333333 4d4d4d 666666 808080 999999 b3b3b3 cccccc e6e6e6 ececec f2f2f2 f9f9f9 ffffff 800000 ff0000 808000 ffff00 008000 00ff00 008080 00ffff 000080 0000ff 800080 ff00ff 2b0000 550000 800000 aa0000 d40000 ff0000 ff2a2a ff5555 ff8080 ffaaaa ffd5d5 280b0b 501616 782121 a02c2c c83737 d35f5f de8787 e9afaf f4d7d7 241c1c 483737 6c5353 916f6f ac9393 c8b7b7 e3dbdb 2b1100 552200 803300 aa4400 d45500 ff6600 ff7f2a ff9955 ffb380 ffccaa ffe6d5 28170b 502d16 784421 a05a2c c87137 d38d5f deaa87 e9c6af f4e3d7 241f1c 483e37 6c5d53 917c6f ac9d93 c8beb7 e3dedb 2b2200 554400 806600 aa8800".split(" ");

function Palette() {
  return (
    <div className="relative flex h-[19px] shrink-0 items-stretch">
      <div className="flex min-w-0 flex-1 overflow-hidden border border-[#bdbab6]">
        <button type="button" aria-label="No colour" className="w-4 shrink-0 bg-white">
          <svg aria-hidden="true" width="16" height="17"><path d="m1 1 14 15M15 1 1 16" stroke="#7a1015" strokeWidth="1.500" /></svg>
        </button>
        {palette.map((c, i) => (
          <button key={i} type="button" aria-label={`#${c}`} className="w-4 shrink-0" style={{ backgroundColor: `#${c}` }} />
        ))}
      </div>
      <span className="flex w-3 shrink-0 items-start justify-center pt-0.5">
        <Icon size={8} box={8}><path d="M6 0v8L1 4z" fill="#77736e" /></Icon>
      </span>
      <span className="absolute bottom-0 left-0 h-[3px] w-[264px] bg-[#f07746]" />
    </div>
  );
}

function StatusBar() {
  return (
    <footer className="flex h-[27px] shrink-0 items-center pb-px text-[12px] leading-[13px] text-[#4c4c4c]">
      <dl className="grid w-[126px] grid-cols-[71px_1fr] pl-0.5">
        <dt>Fill:</dt><dd>N/A</dd>
        <dt>Stroke:</dt><dd>N/A</dd>
      </dl>
      <label htmlFor="opacity" className="w-[15px]">O:</label>
      <div className="flex h-[22px] w-9 items-center rounded border border-[#cfccc9] bg-[#efeeec]">
        <input id="opacity" defaultValue="100" disabled className="h-full w-[21px] min-w-0 border-r border-[#d9d7d4] pl-1 text-[12px] text-[#c4c1bd]" />
        <SpinArrows />
      </div>
      <span className="ml-1 mr-0.5 h-[26px] w-px bg-[#d3d0cd]" />
      <button type="button" aria-label="Toggle layer visibility" className="flex w-5 justify-center">
        <Icon size={14} box={14}>
          <path d="M1 8c3-4 9-4 12 0-3 3.500-9 3.500-12 0z" stroke="#222" strokeWidth="1.200" /><circle cx="7" cy="7.500" r="2.500" fill="#111" />
          <path d="M2 3.500 3.500 5M5 1.500l.7 2M9 1.500l-.7 2M12 3.500 10.500 5" stroke="#222" />
        </Icon>
      </button>
      <button type="button" aria-label="Lock layer" className="flex w-4 justify-center"><Padlock /></button>
      <div className="relative ml-1 flex items-center">
        <select aria-label="Current layer" className="h-[26px] w-[86px] appearance-none rounded-md border border-[#a09d99] bg-linear-to-b from-[#d6d4d2] to-[#c5c3c0] pl-1.5 text-[12px] font-bold text-[#3c3c3c]">
          <option>•Layer 1</option>
        </select>
        <span className="pointer-events-none absolute right-1.5"><SpinArrows dim={false} /></span>
      </div>
      <p className="ml-1.5 flex-1 truncate text-[14px] leading-5">No objects selected. Click, Shift+click, or drag around objects to select.</p>
      <div className="flex items-center border-l border-[#d3d0cd] pl-[3px]">
        <dl className="grid w-[77px] grid-cols-[12px_1fr]">
          <dt>X:</dt><dd className="pr-2 text-right font-['DejaVu_Sans_Mono',monospace]">6723.06</dd>
          <dt>Y:</dt><dd className="pr-2 text-right font-['DejaVu_Sans_Mono',monospace]">-1245.44</dd>
        </dl>
      </div>
      <label htmlFor="zoom" className="w-3">Z:</label>
      <div className="mr-[3px] flex h-[22px] w-[55px] items-center rounded border border-[#a9a6a2] bg-white">
        <input id="zoom" defaultValue="43%" className="h-full w-[41px] min-w-0 border-r border-[#cfccc9] pr-1 text-right font-['DejaVu_Sans_Mono',monospace] text-[12px] text-[#3c3c3c]" />
        <SpinArrows dim={false} />
      </div>
    </footer>
  );
}

export default function App() {
  return (
    <div className="flex h-screen flex-col overflow-hidden bg-[#f2f1f0] font-['Noto_Sans',sans-serif]">
      <TitleBar />
      <SelectorBar />
      <Workspace />
      <Palette />
      <StatusBar />
    </div>
  );
}
